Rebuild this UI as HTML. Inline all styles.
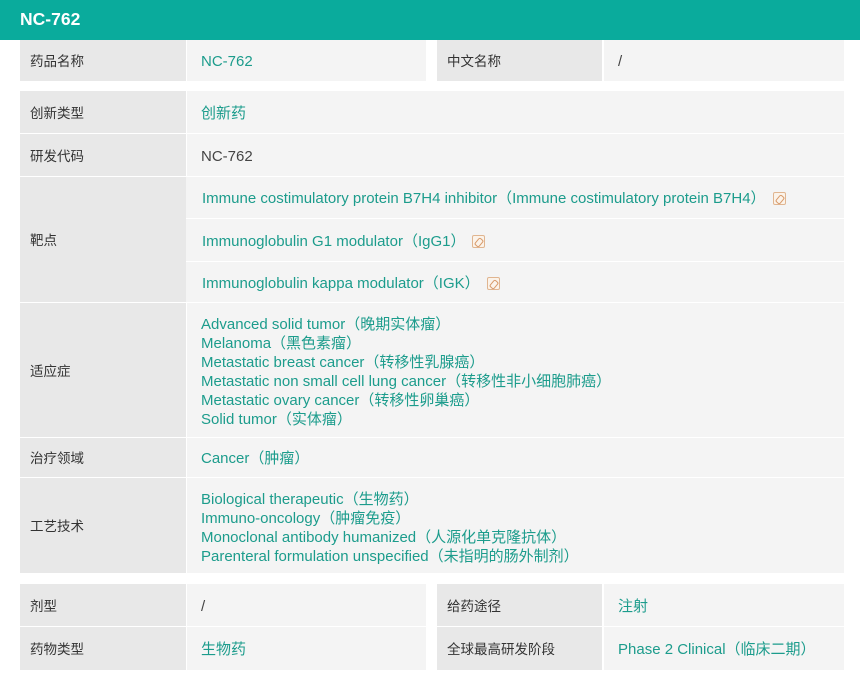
<!DOCTYPE html>
<html><head><meta charset="utf-8"><style>
*{margin:0;padding:0;box-sizing:border-box}
body{width:860px;height:675px;background:#fff;font-family:"Liberation Sans","Noto Sans CJK SC",sans-serif;font-size:15px;color:#444;position:relative;overflow:hidden}
.hd{position:absolute;left:0;top:0;width:860px;height:40px;background:#0aab9c;color:#fff;font-weight:bold;font-size:17.5px;padding:9px 0 0 20px}
.c{position:absolute;display:flex;align-items:center;line-height:19px}
.l{background:#e8e8e8;padding-left:10px;font-family:"Noto Sans CJK SC",sans-serif;font-size:13.5px;color:#333}
.v{background:#f4f4f4;padding-left:14px;padding-top:2px}
.t{color:#1c9c8c}
.m{flex-direction:column;align-items:flex-start;justify-content:center;line-height:19px;padding-top:4px}
.m div{height:19px;white-space:nowrap}
.ic{display:inline-block;width:13px;height:13px;border:1px solid #e0b590;border-radius:2px;margin-left:7px;vertical-align:-2px;position:relative;background:#fbf3ea}
.ic:after{content:"";position:absolute;left:3px;top:2px;width:4px;height:7px;border:1px solid #d89a6a;border-radius:2px;transform:rotate(40deg)}
.sub{position:absolute;left:186px;width:658px;background:#f4f4f4;padding-left:16px;padding-top:2px;display:flex;align-items:center;white-space:nowrap;line-height:19px}
</style></head><body>
<div class="hd">NC-762</div>

<div class="c l" style="left:20px;top:40px;width:166px;height:41px">药品名称</div>
<div class="c v t" style="left:187px;top:40px;width:239px;height:41px">NC-762</div>
<div class="c l" style="left:437px;top:40px;width:165px;height:41px">中文名称</div>
<div class="c v" style="left:604px;top:40px;width:240px;height:41px">/</div>

<div class="c l" style="left:20px;top:91px;width:166px;height:42px">创新类型</div>
<div class="c v t" style="left:187px;top:91px;width:657px;height:42px">创新药</div>
<div class="c l" style="left:20px;top:134px;width:166px;height:42px">研发代码</div>
<div class="c v" style="left:187px;top:134px;width:657px;height:42px">NC-762</div>

<div class="c l" style="left:20px;top:177px;width:166px;height:125px">靶点</div>
<div class="sub t" style="top:177px;height:41px">Immune costimulatory protein B7H4 inhibitor（Immune costimulatory protein B7H4）<span class="ic"></span></div>
<div class="sub t" style="top:219px;height:42px">Immunoglobulin G1 modulator（IgG1）<span class="ic"></span></div>
<div class="sub t" style="top:262px;height:40px">Immunoglobulin kappa modulator（IGK）<span class="ic"></span></div>

<div class="c l" style="left:20px;top:303px;width:166px;height:134px">适应症</div>
<div class="c v t m" style="left:187px;top:303px;width:657px;height:134px">
<div>Advanced solid tumor（晚期实体瘤）</div><div>Melanoma（黑色素瘤）</div><div>Metastatic breast cancer（转移性乳腺癌）</div><div>Metastatic non small cell lung cancer（转移性非小细胞肺癌）</div><div>Metastatic ovary cancer（转移性卵巢癌）</div><div>Solid tumor（实体瘤）</div></div>

<div class="c l" style="left:20px;top:438px;width:166px;height:39px">治疗领域</div>
<div class="c v t" style="left:187px;top:438px;width:657px;height:39px">Cancer（肿瘤）</div>

<div class="c l" style="left:20px;top:478px;width:166px;height:95px">工艺技术</div>
<div class="c v t m" style="left:187px;top:478px;width:657px;height:95px">
<div>Biological therapeutic（生物药）</div><div>Immuno-oncology（肿瘤免疫）</div><div>Monoclonal antibody humanized（人源化单克隆抗体）</div><div>Parenteral formulation unspecified（未指明的肠外制剂）</div></div>

<div class="c l" style="left:20px;top:584px;width:166px;height:42px">剂型</div>
<div class="c v" style="left:187px;top:584px;width:239px;height:42px">/</div>
<div class="c l" style="left:437px;top:584px;width:165px;height:42px">给药途径</div>
<div class="c v t" style="left:604px;top:584px;width:240px;height:42px">注射</div>
<div class="c l" style="left:20px;top:627px;width:166px;height:43px">药物类型</div>
<div class="c v t" style="left:187px;top:627px;width:239px;height:43px">生物药</div>
<div class="c l" style="left:437px;top:627px;width:165px;height:43px">全球最高研发阶段</div>
<div class="c v t" style="left:604px;top:627px;width:240px;height:43px">Phase 2 Clinical（临床二期）</div>
</body></html>
